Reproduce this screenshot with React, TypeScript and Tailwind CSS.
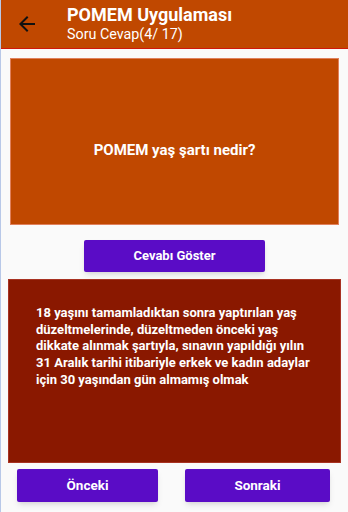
import React from "react";

const FONT = { fontFamily: "Roboto, 'Liberation Sans', sans-serif" };

const ANSWER =
  "18 yaşını tamamladıktan sonra yaptırılan yaş düzeltmelerinde, düzeltmeden önceki yaş dikkate alınmak şartıyla, sınavın yapıldığı yılın 31 Aralık tarihi itibariyle erkek ve kadın adaylar için 30 yaşından gün almamış olmak";

function BackArrow() {
  return (
    <svg viewBox="0 0 24 24" className="h-6 w-6" fill="#111111" aria-hidden>
      <path d="M20 11H7.83l5.59-5.59L12 4l-8 8 8 8 1.41-1.41L7.83 13H20v-2z" />
    </svg>
  );
}

export default function App() {
  return (
    <div
      style={FONT}
      className="flex h-[512px] w-[348px] flex-col overflow-hidden border-l border-[#b8c8e8] bg-[#fafafa]"
    >
      {/* app bar */}
      <header className="flex h-[49px] shrink-0 items-center border-b border-[#d0180c] bg-[#c04800]">
        <div className="ml-[14px] flex w-[52px] items-center">
          <BackArrow />
        </div>
        <div className="flex flex-col text-white">
          <span className="text-[18px] font-bold leading-[20px]">POMEM Uygulaması</span>
          <span className="text-[14.3px] leading-[18px]">Soru Cevap(4/ 17)</span>
        </div>
      </header>

      {/* question */}
      <div className="ml-[9px] mr-[9px] mt-[9px] flex h-[167px] items-center justify-center border border-[#e0805c] bg-[#c04800] pt-[17px]">
        <span className="text-[15px] font-bold text-white">POMEM yaş şartı nedir?</span>
      </div>

      <button className="mx-auto mt-[15px] flex h-[32px] w-[181px] items-center justify-center rounded-[2px] bg-[#5a0cc6] text-[13px] font-bold text-white shadow-md">
        Cevabı Göster
      </button>

      {/* answer */}
      <div className="ml-[7px] mr-[7px] mt-[7px] h-[184px] border border-[#a83222] bg-[#8a1800] pl-[27px] pr-[26px] pt-[25px]">
        <p className="text-[13px] font-bold leading-[16.7px] text-white">{ANSWER}</p>
      </div>

      {/* nav */}
      <div className="mt-[6px] flex">
        <button className="ml-[16px] flex h-[33px] w-[141px] items-center justify-center rounded-[2px] bg-[#5a0cc6] text-[13.5px] font-bold text-white shadow-md">
          Önceki
        </button>
        <button className="ml-[27px] flex h-[33px] w-[145px] items-center justify-center rounded-[2px] bg-[#5a0cc6] text-[13.5px] font-bold text-white shadow-md">
          Sonraki
        </button>
      </div>
    </div>
  );
}
